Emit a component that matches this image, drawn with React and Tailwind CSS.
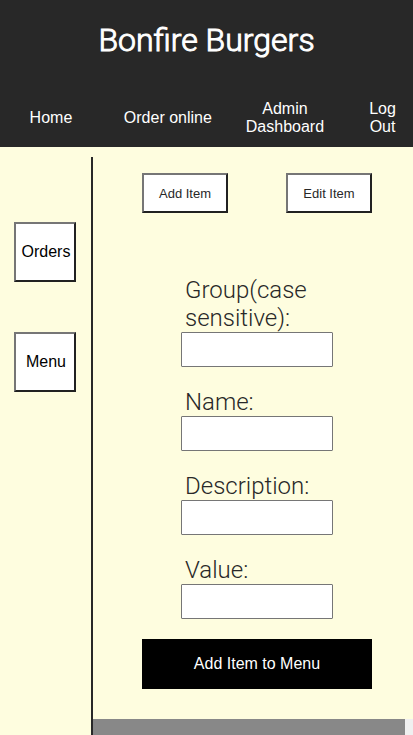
const navLinks = ["Home", "Order online", "Admin Dashboard"];

const fields = [
  { id: "group", label: "Group(case sensitive):" },
  { id: "name", label: "Name:" },
  { id: "description", label: "Description:" },
  { id: "value", label: "Value:" },
];

const raised =
  "border-2 border-t-[#767676] border-l-[#767676] border-r-[#212121] border-b-[#212121] bg-white";

function Header() {
  return (
    <header className="bg-[#282828] text-white">
      <h1 className="pt-5 text-center font-['Roboto',sans-serif] text-[32px] leading-10 font-light [-webkit-text-stroke:1px_white]">
        Bonfire Burgers
      </h1>
      <nav className="mt-[33px] grid grid-cols-[102fr_132fr_102fr_77fr] items-center pb-1 text-center text-base leading-[18px]">
        {navLinks.map((name) => (
          <a key={name} href="#" className="px-3 py-[7px]">
            {name}
          </a>
        ))}
        <a href="#" className="pr-4 pl-8 py-[7px]">
          Log Out
        </a>
      </nav>
    </header>
  );
}

function Sidebar() {
  return (
    <aside className="mt-[10px] flex w-[93px] shrink-0 flex-col gap-[50px] border-r-2 border-[#282828] pt-[65px] pl-[14px]">
      {["Orders", "Menu"].map((name) => (
        <button key={name} type="button" className={`${raised} h-[60px] w-[62px] pl-0.5 text-base text-black`}>
          {name}
        </button>
      ))}
    </aside>
  );
}

function ItemForm() {
  return (
    <form className="flex flex-col pt-[63px]" onSubmit={(e) => e.preventDefault()}>
      <div className="mx-[39px] flex flex-col gap-[21px]">
        {fields.map(({ id, label }) => (
          <div key={id} className="flex flex-col">
            <label
              htmlFor={id}
              className="pl-1 font-['Roboto',sans-serif] text-2xl leading-[28px] font-light text-[#282828]"
            >
              {label}
            </label>
            <input
              id={id}
              type="text"
              className="h-[35px] w-full rounded-[1px] border border-[#767676] bg-white px-1"
            />
          </div>
        ))}
      </div>
      <button type="submit" className="mt-5 h-[50px] bg-black text-base text-white">
        Add Item to Menu
      </button>
    </form>
  );
}

export default function App() {
  return (
    <div className="flex min-h-screen flex-col bg-[#fefddf] font-['Liberation_Sans',Arial,sans-serif]">
      <Header />
      <div className="flex grow">
        <Sidebar />
        <main className="flex min-w-0 grow flex-col justify-between">
          <div className="pt-[26px] pr-[41px] pb-[30px] pl-[49px]">
            <div className="flex justify-between">
              {["Add Item", "Edit Item"].map((name) => (
                <button
                  key={name}
                  type="button"
                  className={`${raised} h-10 w-[86px] pt-0.5 text-[13px] text-[#282828]`}
                >
                  {name}
                </button>
              ))}
            </div>
            <ItemForm />
          </div>
          <div className="h-4 bg-[#f0f0f0] pr-2">
            <div className="h-full bg-[#888888]" />
          </div>
        </main>
      </div>
    </div>
  );
}
